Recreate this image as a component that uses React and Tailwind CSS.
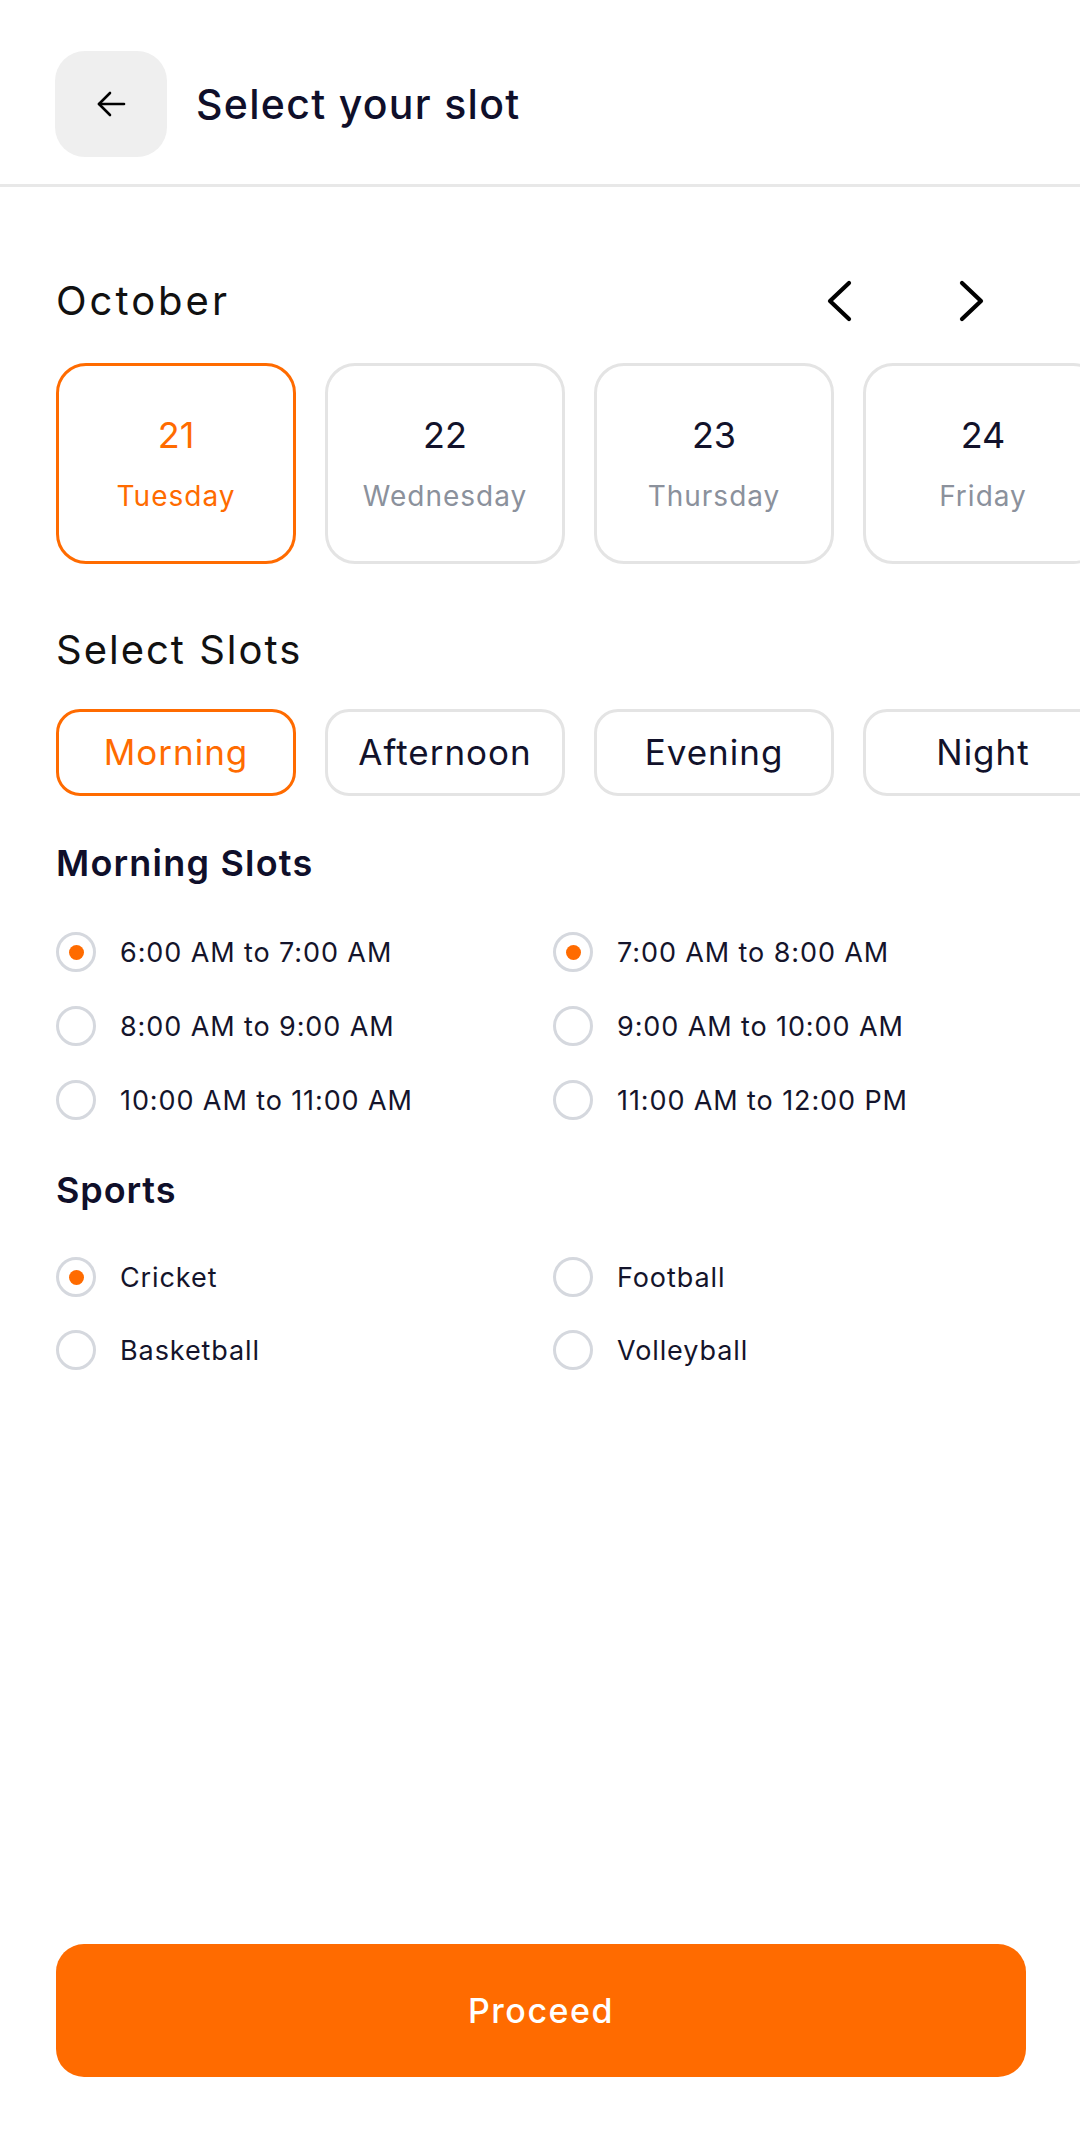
import React from "react";

function Radio({ checked, label }) {
  return (
    <div className="flex items-center gap-[24px] h-[40px]">
      <div className="w-[40px] h-[40px] rounded-full border-[3px] border-[#d5d8de] flex items-center justify-center shrink-0">
        {checked && <div className="w-[15px] h-[15px] rounded-full bg-[#ff6b00]" />}
      </div>
      <span className="text-[27px] leading-none tracking-[0.9px] text-[#14142b]">{label}</span>
    </div>
  );
}

export default function App() {
  const days = [
    { n: "21", d: "Tuesday", active: true },
    { n: "22", d: "Wednesday" },
    { n: "23", d: "Thursday" },
    { n: "24", d: "Friday" },
  ];
  const pills = [
    { t: "Morning", active: true },
    { t: "Afternoon" },
    { t: "Evening" },
    { t: "Night" },
  ];
  const slots = [
    ["6:00 AM to 7:00 AM", true],
    ["7:00 AM to 8:00 AM", true],
    ["8:00 AM to 9:00 AM", false],
    ["9:00 AM to 10:00 AM", false],
    ["10:00 AM to 11:00 AM", false],
    ["11:00 AM to 12:00 PM", false],
  ];
  const sports = [
    ["Cricket", true],
    ["Football", false],
    ["Basketball", false],
    ["Volleyball", false],
  ];
  return (
    <div className="w-[1080px] h-[2134px] bg-white flex flex-col overflow-hidden font-['Inter',sans-serif]">
      <header className="h-[187px] border-b-[3px] border-[#e8e8e8] pt-[51px] pl-[55px] flex items-start shrink-0">
        <div className="flex items-center gap-[29px]">
          <button className="w-[112px] h-[106px] rounded-[30px] bg-[#efefef] flex items-center justify-center">
            <svg width="30" height="26" viewBox="0 0 30 26" fill="none" stroke="#000" strokeWidth="2.6" strokeLinecap="round" strokeLinejoin="round">
              <path d="M28 13H3" />
              <path d="M14 2L3 13L14 24" />
            </svg>
          </button>
          <h1 className="text-[41px] leading-none font-medium text-[#0f0f2a] tracking-[1.3px]">Select your slot</h1>
        </div>
      </header>

      <main className="flex-1 flex flex-col pl-[56px] pr-[55px] pb-[57px]">
        <div className="mt-[94px] h-[40px] flex items-center justify-between">
          <h2 className="text-[40px] leading-none text-[#111] tracking-[3px]">October</h2>
          <div className="flex items-center gap-[107px] mr-[40px]">
            <svg width="26" height="42" viewBox="0 0 26 42" fill="none" stroke="#000" strokeWidth="4.2" strokeLinecap="round" strokeLinejoin="round">
              <path d="M23 3L4 21L23 39" />
            </svg>
            <svg width="26" height="42" viewBox="0 0 26 42" fill="none" stroke="#000" strokeWidth="4.2" strokeLinecap="round" strokeLinejoin="round">
              <path d="M3 3L22 21L3 39" />
            </svg>
          </div>
        </div>

        <div className="mt-[42px] mr-[-55px] overflow-hidden flex gap-[29px]">
          {days.map((d) => (
            <div
              key={d.n}
              className={
                "w-[240px] h-[201px] shrink-0 rounded-[30px] border-[3px] flex flex-col items-center justify-center gap-[29px] " +
                (d.active ? "border-[#ff6b00]" : "border-[#e4e4e4]")
              }
            >
              <span className={"text-[36px] leading-none " + (d.active ? "text-[#ff6b00]" : "text-[#12122b]")}>{d.n}</span>
              <span className={"text-[28px] leading-none tracking-[1px] " + (d.active ? "text-[#ff6b00]" : "text-[#8b919c]")}>{d.d}</span>
            </div>
          ))}
        </div>

        <h2 className="mt-[66px] text-[40px] leading-none text-[#111] tracking-[2px]">Select Slots</h2>

        <div className="mt-[39px] mr-[-55px] overflow-hidden flex gap-[29px]">
          {pills.map((p) => (
            <div
              key={p.t}
              className={
                "w-[240px] h-[87px] shrink-0 rounded-[24px] border-[3px] flex items-center justify-center " +
                (p.active ? "border-[#ff6b00]" : "border-[#e4e4e4]")
              }
            >
              <span className={"text-[35px] leading-none tracking-[1px] " + (p.active ? "text-[#ff6b00]" : "text-[#12122b]")}>{p.t}</span>
            </div>
          ))}
        </div>

        <h3 className="mt-[49px] text-[36px] leading-none font-semibold text-[#0f0f2a] tracking-[1.2px]">Morning Slots</h3>

        <div className="mt-[51px] grid grid-cols-[497px_1fr] gap-y-[34px]">
          {slots.map(([l, c]) => (
            <Radio key={l} label={l} checked={c} />
          ))}
        </div>

        <h3 className="mt-[52px] text-[36px] leading-none font-semibold text-[#0f0f2a] tracking-[0.9px]">Sports</h3>

        <div className="mt-[49px] grid grid-cols-[497px_1fr] gap-y-[33px]">
          {sports.map(([l, c]) => (
            <Radio key={l} label={l} checked={c} />
          ))}
        </div>

        <button className="mt-auto w-[970px] h-[133px] rounded-[28px] bg-[#ff6b00] flex items-center justify-center">
          <span className="text-[34px] leading-none font-medium text-white tracking-[1.5px]">Proceed</span>
        </button>
      </main>
    </div>
  );
}
